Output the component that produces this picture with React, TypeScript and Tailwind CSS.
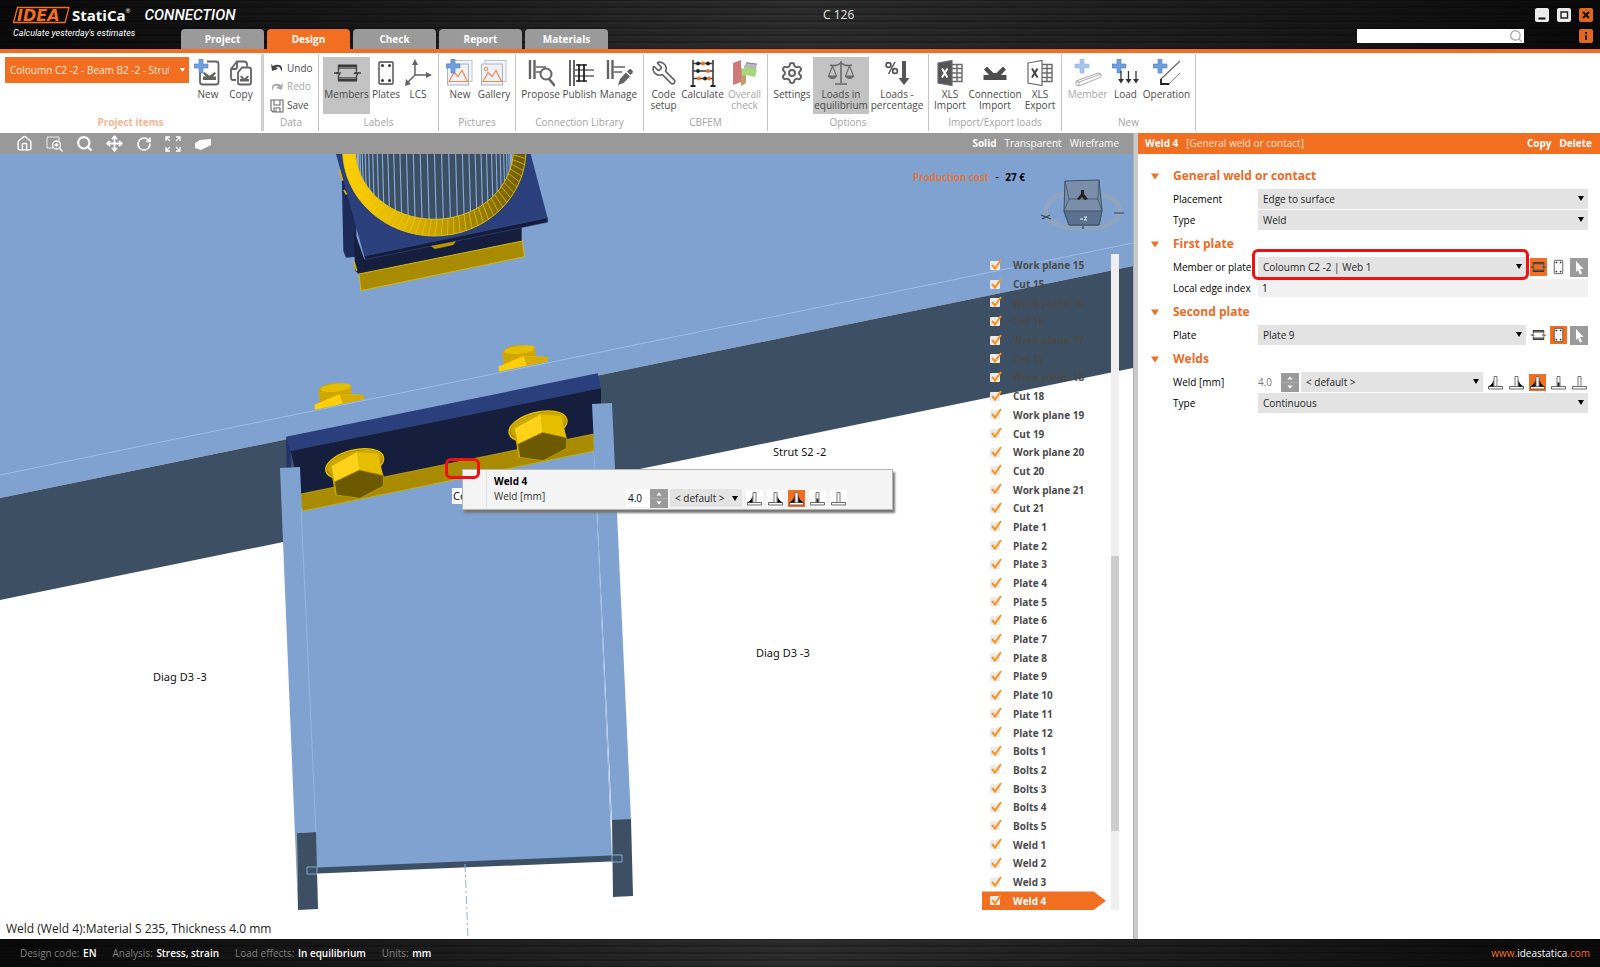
import React, { useState } from "react";
import { House, Move, RotateCw, Search, Settings, Wrench } from "lucide-react";

/* ---------- ribbon icons ---------- */

const Plus = ({ x = 0, y = 0 }: { x?: number; y?: number }) => (
  <path transform={`translate(${x} ${y})`} d="M5 0h4v5h5v4H9v5H5V9H0V5h5z" fill="#6f9fdc" stroke="#4f82c4" strokeWidth=".6" />
);

const Svg = ({ children, w = 28, h = 28 }: { children: React.ReactNode; w?: number; h?: number }) => (
  <svg width={w} height={h} viewBox={`0 0 ${w} ${h}`} fill="none" aria-hidden="true">
    {children}
  </svg>
);

const NewItemIcon = () => (
  <Svg>
    <path d="M13 2.500h9q2.500 0 2.500 2.500v18q0 2.500-2.500 2.500H8.500Q6 25.500 6 23V14" stroke="#636363" strokeWidth="1.800" />
    <path d="M9 21h13v-3.500h-3l3-3-1.500-1.500-4.500 3.500h-1L10.500 13 9 14.500l3 3H9z" fill="#636363" />
    <Plus x={0} y={0} />
  </Svg>
);
const CopyItemIcon = () => (
  <Svg>
    <path d="M9 21H6q-2 0-2-2V10l6-7.500h7q3 0 3 3v2M10 3v5q0 2-2 2H4" stroke="#636363" strokeWidth="1.800" />
    <path d="M15 8.500h7q2 0 2 2v13q0 2-2 2h-9q-2 0-2-2v-10z" fill="#fff" stroke="#636363" strokeWidth="1.800" />
    <path d="M13 22.500h9v-2.500h-2l2-2.500-1.500-1-3 3-3-3-1.500 1 2 2.500h-2z" fill="#636363" />
  </Svg>
);
const MemberGlyph = () => (
  <>
    <path d="M5 7h19M5 21h19" stroke="#3a3a3a" strokeWidth="3" />
    <path d="M5 9.500h19M5 18.500h19" stroke="#6a6a6a" strokeWidth="1.200" />
    <path d="M5.500 6v6M6 12.500l-3 2 4-.5-1.500 3v5M23.500 6v6M24 12.500l-3 2 4-.5-1.500 3v5" stroke="#444" strokeWidth="1.400" />
    <path d="M1 14h3M25 14h3" stroke="#444" strokeWidth="1.300" />
  </>
);
const PlateGlyph = () => (
  <>
    <rect x="7" y="3" width="14" height="22" rx="1" fill="#fff" stroke="#4a4a4a" strokeWidth="1.400" />
    {[[10.5, 6.5], [17.5, 6.5], [10.5, 21.5], [17.5, 21.5]].map(([x, y]) => (
      <circle key={`${x}-${y}`} cx={x} cy={y} r="1.500" fill="#333" />
    ))}
  </>
);
const MembersIcon = () => <Svg><MemberGlyph /></Svg>;
const PlatesIcon = () => <Svg><PlateGlyph /></Svg>;
const LcsIcon = () => (
  <Svg>
    <path d="M11 16V4M11 16h12M11 16l-7 7" stroke="#636363" strokeWidth="1.500" />
    <path d="M11 0l3 6H8zM28 16l-6 3v-6zM1 27l1-7 5 5z" fill="#636363" />
  </Svg>
);
const Picture = () => (
  <>
    <rect x="5" y="1.500" width="21" height="21" fill="#f4f6f9" stroke="#bcc3cc" />
    <rect x="1.500" y="5" width="21" height="21" fill="#eef1f5" stroke="#aab3bf" />
    <path d="M3 22.500l5-9 4 4 4-6 5.500 11z" stroke="#f0894f" strokeWidth="1.200" />
  </>
);
const NewPictureIcon = () => <Svg><Picture /><Plus x={0} y={0} /></Svg>;
const GalleryIcon = () => <Svg><Picture /><circle cx="6" cy="10" r="1.800" stroke="#f0894f" /></Svg>;
const Rails = () => <path d="M3 1v19M7.500 1v19" stroke="#636363" strokeWidth="2.400" />;
const ProposeIcon = () => (
  <Svg>
    <Rails />
    <path d="M9 8h10M9 13h5" stroke="#636363" strokeWidth="1.400" />
    <circle cx="19" cy="15" r="5.500" stroke="#636363" strokeWidth="2" />
    <path d="M22 20l6 7" stroke="#636363" strokeWidth="2.500" />
  </Svg>
);
const PublishIcon = () => (
  <Svg>
    <path d="M4 1v26M8 1v26" stroke="#636363" strokeWidth="2" />
    <path d="M9 11h19M9 17h19" stroke="#636363" strokeWidth="1.400" />
    <path d="M13 5v18M18 5v18" stroke="#222" strokeWidth="1.800" />
    <path d="M10 6h11M10 22h11" stroke="#222" strokeWidth="1.600" />
  </Svg>
);
const ManageIcon = () => (
  <Svg>
    <Rails />
    <path d="M9 8h11M9 13h8" stroke="#636363" strokeWidth="1.400" />
    <path d="M13 26l2-6 6-6.500 4 4-6.500 6.500zM22 12.500l2-2q1.500-1 3 .5t.5 3l-2 2z" fill="#636363" />
  </Svg>
);
const CalculateIcon = () => (
  <Svg>
    <path d="M4 1v26M24 1v26M4 4.500h20M4 12h20M4 19.500h20" stroke="#3a3a3a" strokeWidth="1.600" />
    <path d="M1.500 27h5M21.500 27h5" stroke="#222" strokeWidth="2" />
    <g fill="#222"><circle cx="9" cy="4.500" r="1.900" /><circle cx="19" cy="4.500" r="1.900" /><circle cx="9" cy="12" r="1.900" /><circle cx="16" cy="19.500" r="1.900" /></g>
    <g fill="#f26f21"><circle cx="14" cy="4.500" r="1.900" /><circle cx="19" cy="12" r="1.900" /><circle cx="10" cy="19.500" r="1.900" /><circle cx="20" cy="19.500" r="1.900" /></g>
  </Svg>
);
const OverallIcon = () => (
  <Svg>
    <path d="M2 4l8-3v22l-8 3z" fill="#cf7a7a" />
    <path d="M10 9l5 3v12l-5 3z" fill="#c09a6c" />
    <path d="M13 7l3-4 10 2-1 6-12 1z" fill="#b9b9b9" />
    <path d="M11 11l4-3 11 3-2 7-9-2-4 1z" fill="#a5d77c" />
    <path d="M15 4l11 1" stroke="#888" />
  </Svg>
);
const ScaleIcon = () => (
  <Svg>
    <path d="M14 2v22M3 6q6 2 11-2 5 4 11 2M8 25h12" stroke="#6a6a6a" strokeWidth="1.600" />
    <path d="M5.500 7L1.500 17h8zM22.500 7l-4 10h8z" stroke="#6a6a6a" strokeWidth="1.100" />
    <path d="M1 17h9q-1 3-4.500 3T1 17zM18 17h9q-1 3-4.500 3T18 17z" fill="#6a6a6a" />
  </Svg>
);
const PercentIcon = () => (
  <Svg>
    <circle cx="5.500" cy="6" r="2.400" stroke="#555" strokeWidth="1.700" />
    <circle cx="12" cy="12" r="2.400" stroke="#555" strokeWidth="1.700" />
    <path d="M12 3L5.500 15" stroke="#555" strokeWidth="1.500" />
    <path d="M19 2h4v17h3.500L21 26l-5.500-7H19z" fill="#555" />
  </Svg>
);
const XlsIcon = ({ solid }: { solid?: boolean }) => (
  <Svg>
    <path d="M15 5.500h11v17H15M15 9.500h11M15 14h11M15 18.500h11M21 5.500v17" stroke="#6a6a6a" strokeWidth="1.400" />
    <path d="M2 4l14-2.500v25L2 24z" fill={solid ? "#555" : "#fff"} stroke="#6a6a6a" strokeWidth="1.200" />
    <path d="M6 9.500l5.500 9M11.500 9.500l-5.500 9" stroke={solid ? "#fff" : "#444"} strokeWidth="2" />
  </Svg>
);
const ConnectionIcon = () => (
  <Svg>
    <path d="M2.500 21h23v-5h-5.500l5-5.500-3-3-6.500 6.500h-3L6 7.500l-3 3 5 5.500H2.500z" fill="#4d4d4d" />
  </Svg>
);
const NewMemberIcon = () => (
  <Svg>
    <g opacity=".6"><Plus x={1} y={0} /></g>
    <path d="M2 22l22-8 3 1v3L5 27l-3-1zM2 22l3 1v4M5 23l22-8" stroke="#aaa" />
  </Svg>
);
const LoadIcon = () => (
  <Svg>
    <Plus x={0} y={0} />
    <path d="M9 12v11M16.500 12v11M24 12v11" stroke="#333" strokeWidth="1.300" />
    <path d="M6 20h6l-3 4.500zM13.500 20h6l-3 4.500zM21 20h6l-3 4.500z" fill="#333" />
  </Svg>
);
const OperationIcon = () => (
  <Svg>
    <Plus x={0} y={0} />
    <path d="M27 2L8 20v5h9" stroke="#666" strokeWidth="1.200" />
    <path d="M8 20v5h8" stroke="#222" strokeWidth="1.800" />
    <path d="M27 14L16 25" stroke="#888" />
  </Svg>
);
const LucideTool = ({ children }: { children: React.ReactNode }) => (
  <span className="flex h-7 w-7 items-center justify-center text-[#636363]">{children}</span>
);

/* ---------- ribbon ---------- */

type Tool = { label: string[]; icon: React.ReactNode; width: string; active?: boolean; disabled?: boolean };
type Group = { name: string; width: string; tools: Tool[] };

const groups: Group[] = [
  {
    name: "Labels",
    width: "w-[120px]",
    tools: [
      { label: ["Members"], icon: <MembersIcon />, width: "w-[47px]", active: true },
      { label: ["Plates"], icon: <PlatesIcon />, width: "w-8" },
      { label: ["LCS"], icon: <LcsIcon />, width: "w-8" },
    ],
  },
  {
    name: "Pictures",
    width: "w-[77px]",
    tools: [
      { label: ["New"], icon: <NewPictureIcon />, width: "w-[34px]" },
      { label: ["Gallery"], icon: <GalleryIcon />, width: "w-[34px]" },
    ],
  },
  {
    name: "Connection Library",
    width: "w-[128px]",
    tools: [
      { label: ["Propose"], icon: <ProposeIcon />, width: "w-10" },
      { label: ["Publish"], icon: <PublishIcon />, width: "w-[38px]" },
      { label: ["Manage"], icon: <ManageIcon />, width: "w-10" },
    ],
  },
  {
    name: "CBFEM",
    width: "w-[124px]",
    tools: [
      { label: ["Code", "setup"], icon: <LucideTool><Wrench size={26} strokeWidth={1.5} className="-scale-x-100" /></LucideTool>, width: "w-[34px]" },
      { label: ["Calculate"], icon: <CalculateIcon />, width: "w-11" },
      { label: ["Overall", "check"], icon: <OverallIcon />, width: "w-10", disabled: true },
    ],
  },
  {
    name: "Options",
    width: "w-[161px]",
    tools: [
      { label: ["Settings"], icon: <LucideTool><Settings size={24} strokeWidth={2} /></LucideTool>, width: "w-[42px]" },
      { label: ["Loads in", "equilibrium"], icon: <ScaleIcon />, width: "w-14", active: true },
      { label: ["Loads -", "percentage"], icon: <PercentIcon />, width: "w-14" },
    ],
  },
  {
    name: "Import/Export loads",
    width: "w-[133px]",
    tools: [
      { label: ["XLS", "Import"], icon: <XlsIcon solid />, width: "w-[38px]" },
      { label: ["Connection", "Import"], icon: <ConnectionIcon />, width: "w-[52px]" },
      { label: ["XLS", "Export"], icon: <XlsIcon />, width: "w-[38px]" },
    ],
  },
  {
    name: "New",
    width: "w-[134px]",
    tools: [
      { label: ["Member"], icon: <NewMemberIcon />, width: "w-11", disabled: true },
      { label: ["Load"], icon: <LoadIcon />, width: "w-8" },
      { label: ["Operation"], icon: <OperationIcon />, width: "w-[50px]" },
    ],
  },
];

function RibbonButton({ label, icon, width, active, disabled }: Tool) {
  return (
    <button
      type="button"
      disabled={disabled}
      className={`flex h-[57px] shrink-0 flex-col items-center pt-[2px] text-[10px] leading-[11px] whitespace-nowrap ${width} ${
        active ? "bg-[#c3c3c3]" : ""
      } ${disabled ? "text-[#a6a6a6]" : "text-[#4b4b4b]"}`}
    >
      {icon}
      <span className="mt-[2px] flex flex-col items-center">
        {label.map((line) => (
          <span key={line}>{line}</span>
        ))}
      </span>
    </button>
  );
}

function RibbonGroup({ name, width, tools }: Group) {
  return (
    <section className={`flex shrink-0 flex-col items-center border-r border-[#c4c4c4] ${width}`}>
      <div className="flex h-[61px] items-start justify-center pt-[3px]">
        {tools.map((tool) => (
          <RibbonButton key={tool.label.join(" ")} {...tool} />
        ))}
      </div>
      <span className="text-[10px] leading-[14px] whitespace-nowrap text-[#a3a3a3]">{name}</span>
    </section>
  );
}

function Ribbon() {
  return (
    <div className="flex h-20 bg-white pt-px pb-[2px]">
      <section className="flex w-[264px] shrink-0 flex-col border-r-[3px] border-[#cfcfcf]">
        <div className="flex h-[61px] items-start pt-[3px] pl-[5px]">
          <div className="relative w-[184px]">
            <select aria-label="Project item" className="block h-[26px] w-full appearance-none bg-[#f26f21] pr-5 pl-[5px] text-[10px] text-[#ffe6d8]">
              <option>Coloumn C2 -2 - Beam B2 -2 - Strut S2 -2</option>
            </select>
            <svg className="pointer-events-none absolute top-[11px] right-1 h-1 w-[5px]" viewBox="0 0 5 4" fill="#fff"><path d="M0 0h5L2.500 4z" /></svg>
          </div>
          <RibbonButton label={["New"]} icon={<NewItemIcon />} width="w-[38px]" />
          <RibbonButton label={["Copy"]} icon={<CopyItemIcon />} width="w-7" />
        </div>
        <span className="text-center text-[10px] leading-[14px] font-bold text-[#f8b491]">Project items</span>
      </section>
      <section className="flex w-[55px] shrink-0 flex-col border-r border-[#c4c4c4]">
        <div className="flex h-[61px] flex-col justify-around pt-[5px] pl-[6px] text-[10px] text-[#4b4b4b]">
          <button type="button" className="flex h-[18px] items-center gap-[3px]">
            <Svg w={14} h={14}><path d="M1 3l1 7 6-2-2-1.500q4-2.500 5.500 4.500Q14 2 5 4L3 5z" fill="#444" /></Svg>Undo
          </button>
          <button type="button" disabled className="flex h-[18px] items-center gap-[3px] text-[#a8a8a8]">
            <Svg w={14} h={14}><path d="M13 3l-1 7-6-2 2-1.500q-4-2.500-5.500 4.500Q0 2 9 4l2 1z" fill="#aaa" /></Svg>Redo
          </button>
          <button type="button" className="flex h-[18px] items-center gap-[3px]">
            <Svg w={14} h={14}><path d="M1 1h12v12H3l-2-2zM4 1v5h6V1M4 13V9h6v4M6 10.500v2" stroke="#666" strokeWidth="1.100" /></Svg>Save
          </button>
        </div>
        <span className="text-center text-[10px] leading-[14px] text-[#a3a3a3]">Data</span>
      </section>
      {groups.map((g) => (
        <RibbonGroup key={g.name} {...g} />
      ))}
    </div>
  );
}

/* ---------- title bar ---------- */

const brushed =
  "bg-[linear-gradient(90deg,#000000cc_0%,#00000055_30%,#00000000_50%,#00000055_72%,#000000cc_100%),repeating-linear-gradient(180deg,#1c1c1c_0px,#343434_2px,#262626_4px,#303030_5px,#1e1e1e_7px)]";

function TitleBar() {
  const tabs = ["Project", "Design", "Check", "Report", "Materials"];
  return (
    <header className={`flex h-[53px] border-b-4 border-[#f26f21] ${brushed}`}>
      <div className="w-[181px] shrink-0 pt-[6px] pl-[13px] whitespace-nowrap text-white">
        <div className="flex h-[18px] items-center">
          <svg className="shrink-0" width="57" height="18" viewBox="0 0 57 18" aria-label="IDEA">
            <path d="M4.500 1.500H56L52 16.500H.5z" fill="none" stroke="#f26f21" strokeWidth="1.300" />
            <text x="4" y="14.500" fontFamily="DejaVu Sans" fontSize="16" fontWeight="bold" fontStyle="italic" fill="#f26f21">IDEA</text>
          </svg>
          <span className="ml-[2px] font-['Open_Sans'] text-[15px] leading-[18px] font-bold">StatiCa</span>
          <sup className="-top-1 text-[6px]">®</sup>
          <span className="ml-[14px] font-['Roboto'] text-[15px] leading-[18px] font-medium italic">CONNECTION</span>
        </div>
        <div className="mt-[3px] font-['Roboto'] text-[9px] leading-3 italic">Calculate yesterday's estimates</div>
      </div>
      <nav className="flex items-end gap-[3px]">
        {tabs.map((t) => (
          <button key={t} type="button" className={`h-5 w-[83px] rounded-t-[4px] text-[10px] leading-5 font-bold text-white ${t === "Design" ? "bg-[#f26f21]" : "bg-[#9a9a9a]"}`}>
            {t}
          </button>
        ))}
      </nav>
      <h1 className="flex-1 pt-[6px] pl-[215px] text-[12px] leading-[18px] text-[#e6e6e6]">C 126</h1>
      <div className="flex w-[243px] shrink-0 flex-col gap-[7px] pt-2 pr-[7px]">
        <div className="flex justify-end gap-2">
          <button type="button" aria-label="Minimize" className="h-[14px] w-[14px] rounded-[2px] bg-[#ececec]"><Svg w={14} h={14}><path d="M3.500 10.500h7" stroke="#111" strokeWidth="2" /></Svg></button>
          <button type="button" aria-label="Maximize" className="h-[14px] w-[14px] rounded-[2px] bg-[#ececec]"><Svg w={14} h={14}><path d="M4 4h6.500v6H4z" stroke="#222" strokeWidth="1.400" /></Svg></button>
          <button type="button" aria-label="Close" className="h-[14px] w-[14px] rounded-[2px] bg-[#e2671f]"><Svg w={14} h={14}><path d="M4 4l6 6M10 4l-6 6" stroke="#111" strokeWidth="2" /></Svg></button>
        </div>
        <div className="flex justify-between">
          <div className="flex h-[14px] w-[167px] items-center bg-white">
            <input type="search" aria-label="Search" className="h-full w-full min-w-0 flex-1 px-1 text-[10px] outline-none" />
            <Search size={14} className="mr-px shrink-0 text-[#b0b0b0]" strokeWidth={2.5} />
          </div>
          <button type="button" aria-label="Info" className="h-[14px] w-[14px] rounded-[2px] bg-[#e2671f]"><Svg w={14} h={14}><path d="M7 3v2M7 6v5" stroke="#222" strokeWidth="2" /></Svg></button>
        </div>
      </div>
    </header>
  );
}

/* ---------- 3D scene ---------- */

const ringAngles = Array.from({ length: 45 }, (_, i) => (i * 4 * Math.PI) / 180);

function Bolt({ dx = 0, dy = 0 }) {
  return (
    <g transform={`translate(${dx} ${dy})`} strokeLinejoin="round">
      <ellipse cx="284" cy="1002" rx="89" ry="42" transform="rotate(-14 284 1002)" fill="#a88700" stroke="#e8c400" strokeWidth="4" />
      <ellipse cx="284" cy="998" rx="84" ry="34" transform="rotate(-14 284 998)" fill="#cda800" />
      <path d="M212 1010L292 966l6 54-76 38z" fill="#ffd21a" />
      <path d="M292 966l62 6 16 66-72-18z" fill="#e6be00" />
      <path d="M222 1056l76-36 72 16v32l-70 37-72-10z" fill="#6c5900" stroke="#c9a600" strokeWidth="2" />
      <path d="M212 1010l10 48 6 37" fill="none" stroke="#c9a600" strokeWidth="5" />
    </g>
  );
}

function Nut({ dx = 0, dy = 0 }) {
  return (
    <g transform={`translate(${dx} ${dy})`}>
      <path d="M175 788q2-27 52-29 48 2 48 22l-4 30-90 10z" fill="#cda600" />
      <ellipse cx="227" cy="773" rx="46" ry="12" transform="rotate(-7 227 773)" fill="#e6be00" />
      <path d="M163 824l76-32 73 3v13l-64 13-83 18z" fill="#ffcf0a" />
      <path d="M239 792l73 3v13l-64 13z" fill="#d6ad00" />
    </g>
  );
}

function Scene() {
  return (
    <svg className="absolute inset-0 h-full w-full" viewBox="0 154 1133 785" preserveAspectRatio="xMinYMin slice" aria-label="3D model of the connection">
      <path d="M0 154h1133v112L0 498z" fill="#80a2d0" />
      <path d="M0 498L1133 266v102L0 600z" fill="#3d4f63" />
      <path d="M0 475L1133 243" stroke="#a0bde6" strokeWidth="1" />

      {/* column web and flanges */}
      <path d="M301 508L594 449l18 408-296 13z" fill="#80a2d0" />
      <path d="M306 868l316-13v6l-316 13z" fill="#3d4f63" />

      <g transform="translate(260 130) scale(.33333)">
        {/* tube stub with its end plate */}
        <path d="M245 120l45 160-2 100-30 3-8-20z" fill="#1d2b5a" />
        <path d="M282 300l31 88L785 290v43L297 432l-12-10z" fill="#151e3c" />
        <path d="M228 72h584l51 193-550 115z" fill="#2a3f7c" />
        <path d="M313 378L863 263v14L315 389z" fill="#141c3a" stroke="#3c5496" strokeWidth="1.500" />
        <path d="M512 348l76-14-8 11-55 12z" fill="#b89800" />
        <path d="M297 432L787 333l6 47-490 102z" fill="#a88b00" stroke="#e0bd00" strokeWidth="2.500" />
        <path d="M238 120l10 32M252 180l8 14M282 395l8 28" stroke="#d9b600" strokeWidth="5" />
        <ellipse cx="523" cy="60" rx="237" ry="208" fill="#3d4f63" />
        <clipPath id="tube"><ellipse cx="523" cy="60" rx="237" ry="208" /></clipPath>
        <g clipPath="url(#tube)" stroke="#86a9d8" strokeWidth="3.500">
          {Array.from({ length: 35 }, (_, i) => {
            const x = 523 - 232 * Math.cos((i * Math.PI) / 34);
            return <path key={i} d={`M${x} 60L${x + 6} 280`} />;
          })}
        </g>
        <linearGradient id="ring" x1="0" x2="1">
          <stop offset="0" stopColor="#ffd000" />
          <stop offset=".4" stopColor="#d8b000" />
          <stop offset="1" stopColor="#6b5800" />
        </linearGradient>
        <path d="M248 60a275 258 0 0 0 550 0h-38a237 208 0 0 1-474 0z" fill="url(#ring)" />
        <g stroke="#f0cc10" strokeWidth="2">
          {ringAngles.map((a) => (
            <path key={a} d={`M${523 + 237 * Math.cos(a)} ${60 + 208 * Math.sin(a)}L${523 + 275 * Math.cos(a + 0.03)} ${60 + 258 * Math.sin(a + 0.03)}`} />
          ))}
        </g>
        <path d="M248 60a275 258 0 0 0 550 0M286 60a237 208 0 0 0 474 0" fill="none" stroke="#f0cc10" strokeWidth="2.500" />

        <Nut />
        <Nut dx={552} dy={-114} />

        {/* bolted plate */}
        <path d="M78 920L1013 730l10 45L92 963z" fill="#2a3f7c" />
        <path d="M78 920l14 43v60H80z" fill="#22336a" />
        <path d="M92 963L1023 775v60l-22 80L123 1092z" fill="#151e3c" />
        <path d="M123 1092L1001 912v51L127 1143z" fill="#a88b00" stroke="#d8b600" strokeWidth="2" />
        <Bolt />
        <Bolt dx={550} dy={-113} />
      </g>

      <path d="M280 468l20-1 16 365-19 1 1 76z" fill="#80a2d0" />
      <path d="M592 404l20-1 19 417-19 1z" fill="#80a2d0" />
      <path d="M297 833l19-1 2 77-20 1z" fill="#3d4f63" />
      <path d="M612 820l19-1 2 77-20 1z" fill="#3d4f63" />
      <path d="M301 508l15 324M594 451l17 369" stroke="#97b6e0" fill="none" />
      <path d="M307 867h10v7h-10zM612 855h10v7h-10z" stroke="#86a9d8" fill="none" />
      <path d="M465 864l3 75" stroke="#8fb0dc" strokeDasharray="8 3 2 3" />
      <path d="M452 488h14v16h-14z" fill="#fff" />
      <g fontFamily="'Noto Sans', sans-serif" fontSize="11" fill="#111">
        <text x="453" y="500">Co</text>
        <text x="773" y="456">Strut S2 -2</text>
        <text x="756" y="657">Diag D3 -3</text>
        <text x="153" y="681">Diag D3 -3</text>
      </g>

      {/* orientation cube */}
      <path d="M1046 208q-2 20 37 20t37-20q-6-12-18-13M1046 208q4-12 18-14" fill="none" stroke="#98a5b8" strokeOpacity=".7" strokeWidth="5" />
      <path d="M1065 181l34-1 3 30-3 15h-30l-5-14z" fill="#7a8ea9" stroke="#3f5066" />
      <path d="M1064 211h38l-3 14h-30z" fill="#5b7190" stroke="#3f5066" />
      <path d="M1065 181l4 18h29l1-19M1069 199l-5 12M1098 199l4 12" stroke="#44566e" fill="none" strokeWidth=".8" />
      <path d="M1077 199l4-5v-4h3v4l4 5-3 1-3-3-3 3z" fill="#222" />
      <path d="M1080 219h3M1084 217h3l-3 3h3" stroke="#e8eef7" fill="none" />
      <path d="M1041 215l10 4M1042 219l8-4M1083 226v3" stroke="#33455c" strokeWidth="1.300" />
      <path d="M1114 213h10" stroke="#33455c" />
    </svg>
  );
}

/* ---------- weld glyphs and small controls ---------- */

function WeldGlyph({ kind }: { kind: number }) {
  return (
    <svg width="17" height="17" viewBox="0 0 17 17" aria-hidden="true">
      <path d="M1.500 12.500h14v2.500h-14z" fill="#fff" stroke="#555" strokeWidth=".9" />
      <path d="M7 2.500h3v10H7z" fill="#fff" stroke="#666" strokeWidth=".9" />
      {(kind === 0 || kind === 2) && <path d="M6.500 5.500v7H1q4.500-1.500 5.500-7z" fill="#000" />}
      {(kind === 1 || kind === 2) && <path d="M10.500 5.500v7H16q-4.500-1.500-5.500-7z" fill="#000" />}
      {kind === 3 && <path d="M7.500 8.500h2v4h-2z" fill="#222" />}
    </svg>
  );
}

const weldNames = ["Left fillet", "Right fillet", "Double fillet", "Butt", "No weld"];

function WeldButtons() {
  const [kind, setKind] = useState(2);
  return (
    <div className="flex shrink-0 gap-1">
      {weldNames.map((n, i) => (
        <button key={n} type="button" aria-label={n} aria-pressed={kind === i} onClick={() => setKind(i)} className={`h-[17px] w-[17px] ${kind === i ? "bg-[#f26f21]" : "bg-white"}`}>
          <WeldGlyph kind={i} />
        </button>
      ))}
    </div>
  );
}

const Spinner = () => (
  <button type="button" aria-label="Change weld size" className="h-[19px] w-[18px] shrink-0 bg-[#9b9b9b]">
    <Svg w={18} h={19}><path d="M9 3.500l2.500 3h-5zM9 15.500l2.500-3h-5z" fill="#fff" /><path d="M0 9.500h18" stroke="#aaa" /></Svg>
  </button>
);

function Drop({ id, options, label }: { id?: string; options: string[]; label?: string }) {
  return (
    <div className="relative h-full min-w-0 flex-1">
      <select id={id} aria-label={label} className="block h-full w-full appearance-none bg-[#e3e3e3] pr-4 pl-[5px] text-[10px] text-[#262626]">
        {options.map((o) => (
          <option key={o}>{o}</option>
        ))}
      </select>
      <svg className="pointer-events-none absolute top-[7px] right-1 h-[5px] w-[6px]" viewBox="0 0 6 5"><path d="M0 0h6L3 5z" /></svg>
    </div>
  );
}

/* ---------- viewport ---------- */

const range = (name: string, n: number) => Array.from({ length: n }, (_, i) => `${name} ${i + 1}`);
const entities = [
  ...[15, 16, 17, 18, 19, 20, 21].flatMap((n) => [`Work plane ${n}`, `Cut ${n}`]),
  ...range("Plate", 12),
  ...range("Bolts", 5),
  ...range("Weld", 4),
];

function EntityList() {
  return (
    <div className="absolute top-[102px] right-[14px] bottom-[29px] flex w-[137px]">
      <ul className="flex flex-1 flex-col">
        {entities.map((name) => {
          const selected = name === "Weld 4";
          return (
            <li
              key={name}
              className={`mr-[5px] flex min-h-0 flex-1 items-center pl-2 ${
                selected ? "bg-[#f26f21] text-white [clip-path:polygon(0_0,90%_0,100%_50%,90%_100%,0_100%)]" : "text-[#4a4a4a]"
              }`}
            >
              <label className="flex items-center gap-[13px] text-[10px] leading-[18px] font-bold">
                <span className="relative h-[9px] w-[10px]">
                  <input type="checkbox" defaultChecked className="peer absolute inset-0 h-full w-full appearance-none rounded-[1px] bg-[#eeeae8]" />
                  <svg className="pointer-events-none absolute -top-[2px] left-0 hidden h-3 w-3 peer-checked:block" viewBox="0 0 12 12" fill="none"><path d="M2 6l3 3.500L11 1" stroke="#f7931e" strokeWidth="2" /></svg>
                </span>
                {name}
              </label>
            </li>
          );
        })}
      </ul>
      <div className="-mt-[2px] flex w-2 flex-col bg-[#efefef]">
        <div className="basis-[46%]" />
        <div className="basis-[42%] bg-[#cdcdcd]" />
      </div>
    </div>
  );
}

function WeldPopup() {
  return (
    <form className="absolute top-[315px] left-[462px] flex h-[41px] w-[431px] border border-[#b5b5b5] bg-[#f4f4f4] text-[10px] shadow-[2px_3px_2px_#777]">
      <div className="w-6 border-r border-[#e2e2e2]" />
      <div className="flex flex-1 flex-col pl-[7px]">
        <strong className="mt-[3px] h-4 leading-4">Weld 4</strong>
        <div className="-mt-px flex h-5 items-center">
          <label htmlFor="popup-weld" className="w-[132px] self-start leading-4 text-[#333]">Weld [mm]</label>
          <input id="popup-weld" defaultValue="4.0" className="h-[18px] w-6 shrink-0 bg-white pl-[2px] text-[10px]" />
          <Spinner />
          <div className="mr-1 ml-[2px] flex h-[18px] w-[72px]">
            <Drop label="Weld material" options={["< default >"]} />
          </div>
          <WeldButtons />
        </div>
      </div>
    </form>
  );
}

function ViewToolbar() {
  return (
    <div className="flex h-[21px] items-center bg-[#999] text-white">
      <div className="flex items-center gap-[13px] pl-4">
        <button type="button" aria-label="Home"><House size={17} strokeWidth={2} /></button>
        <button type="button" aria-label="Zoom window"><Svg w={17} h={17}><path d="M7 13H1V2h12v4" stroke="#eee" /><circle cx="10.500" cy="10" r="4" stroke="#fff" strokeWidth="1.300" /><path d="M13.500 13l3 3.500M10.500 8v4M8.500 10h4" stroke="#fff" strokeWidth="1.300" /></Svg></button>
        <button type="button" aria-label="Zoom"><Search size={17} strokeWidth={3} /></button>
        <button type="button" aria-label="Pan"><Move size={17} strokeWidth={2.5} /></button>
        <button type="button" aria-label="Rotate"><RotateCw size={16} strokeWidth={2.5} /></button>
        <button type="button" aria-label="Zoom to fit"><Svg w={16} h={16}><path d="M1 5V1h4M11 1h4v4M15 11v4h-4M5 15H1v-4M1 1l4 4M15 1l-4 4M15 15l-4-4M1 15l4-4" stroke="#fff" strokeWidth="1.300" /></Svg></button>
        <button type="button" aria-label="Solid view"><Svg w={18} h={14}><path d="M1 6l5-3 11-1v4L6 8zM1 6l6 2v5l-6-2zM7 8l10-3v3L7 13z" fill="#fff" /></Svg></button>
      </div>
      <div className="ml-auto flex pr-[14px] text-[10px]">
        <button type="button" className="mr-2 font-bold">Solid</button>
        <button type="button" className="mr-2">Transparent</button>
        <button type="button">Wireframe</button>
      </div>
    </div>
  );
}

function Viewport() {
  return (
    <main className="flex min-w-0 flex-1 flex-col">
      <ViewToolbar />
      <div className="relative flex-1 overflow-hidden bg-white">
        <Scene />
        <p className="absolute top-[15px] right-[108px] text-[10px] leading-4 font-semibold text-black">
          <span className="mr-1 text-[#f26f21]">Production cost</span> - <span className="ml-1 font-bold">27 €</span>
        </p>
        <EntityList />
        <WeldPopup />
        <div className="absolute top-[304px] left-[445px] h-[21px] w-[35px] rounded-[6px] border-[3px] border-[#f01010]" />
        <p className="absolute bottom-0 left-[6px] text-[12px] leading-5 text-[#222]">Weld (Weld 4):Material S 235, Thickness 4.0 mm</p>
      </div>
    </main>
  );
}

/* ---------- properties panel ---------- */

function Section({ title, children }: { title: string; children: React.ReactNode }) {
  return (
    <section>
      <h2 className="flex h-[26px] items-center text-[12px] font-bold text-[#ec6a26]">
        <svg className="mr-[13px] ml-3 h-[7px] w-[10px]" viewBox="0 0 10 7" fill="#f26f21"><path d="M1 0.500h8L5 6.500z" /></svg>
        {title}
      </h2>
      {children}
    </section>
  );
}

function Row({ label, id, children }: { label: string; id: string; children: React.ReactNode }) {
  return (
    <div className="mb-px flex h-5 items-center pr-3 pl-[35px]">
      <label htmlFor={id} className="w-[85px] shrink-0 text-[10px] font-medium whitespace-nowrap text-black">{label}</label>
      <div className="flex h-full min-w-0 flex-1 items-center">{children}</div>
    </div>
  );
}

function PickButtons({ active }: { active: "member" | "plate" }) {
  return (
    <div className="ml-1 flex shrink-0 items-center gap-[3px]">
      <button type="button" aria-label="Member" className={`h-[18px] w-[17px] ${active === "member" ? "bg-[#f26f21]" : ""}`}><svg width="17" height="18" viewBox="0 0 29 28" fill="none"><MemberGlyph /></svg></button>
      <button type="button" aria-label="Plate" className={`h-[18px] w-[17px] ${active === "plate" ? "bg-[#f26f21]" : ""}`}><svg width="17" height="18" viewBox="0 0 28 28" fill="none"><PlateGlyph /></svg></button>
      <button type="button" aria-label="Pick in scene" className="h-[19px] w-[18px] bg-[#9b9b9b]"><Svg w={18} h={19}><path d="M6 3l7.500 8H10l2 4.500-2 1-2-4.500-2 2z" fill="#fff" /></Svg></button>
    </div>
  );
}

function Properties() {
  return (
    <aside className="w-[462px] shrink-0 bg-white">
      <header className="flex h-[21px] items-center bg-[#f26f21] pr-2 pl-[7px] text-[10px] text-white">
        <strong>Weld 4</strong>
        <span className="ml-2 text-[#ffe3d2]">[General weld or contact]</span>
        <button type="button" className="ml-auto font-bold">Copy</button>
        <button type="button" className="ml-2 font-bold">Delete</button>
      </header>
      <div className="pt-[9px]">
        <Section title="General weld or contact">
          <Row label="Placement" id="placement"><Drop id="placement" options={["Edge to surface"]} /></Row>
          <Row label="Type" id="kind"><Drop id="kind" options={["Weld", "Contact"]} /></Row>
        </Section>
        <Section title="First plate">
          <Row label="Member or plate" id="first">
            <div className="relative h-full min-w-0 flex-1">
              <Drop id="first" options={["Coloumn C2 -2 | Web 1"]} />
              <div className="pointer-events-none absolute -top-2 -right-[3px] -bottom-[3px] -left-[6px] rounded-[6px] border-[3px] border-[#f01010]" />
            </div>
            <PickButtons active="member" />
          </Row>
          <Row label="Local edge index" id="edge"><input id="edge" defaultValue="1" className="h-[18px] w-full bg-[#f1f1f1] pl-1 text-[10px]" /></Row>
        </Section>
        <Section title="Second plate">
          <Row label="Plate" id="second"><Drop id="second" options={["Plate 9"]} /><PickButtons active="plate" /></Row>
        </Section>
        <Section title="Welds">
          <Row label="Weld [mm]" id="size">
            <input id="size" defaultValue="4.0" className="w-[23px] shrink-0 text-[10px] text-[#777]" />
            <Spinner />
            <div className="mr-1 ml-[2px] flex h-full flex-1"><Drop label="Weld material" options={["< default >"]} /></div>
            <WeldButtons />
          </Row>
          <Row label="Type" id="weld-type"><Drop id="weld-type" options={["Continuous", "Partial"]} /></Row>
        </Section>
      </div>
    </aside>
  );
}

function StatusBar() {
  const items = [["Design code:", "EN"], ["Analysis:", "Stress, strain"], ["Load effects:", "In equilibrium"], ["Units:", "mm"]];
  return (
    <footer className={`flex h-7 items-center gap-4 pr-[10px] pl-5 text-[10px] font-medium ${brushed}`}>
      {items.map(([k, v]) => (
        <span key={k} className="text-[#808080]">{k} <b className="ml-px font-semibold text-white">{v}</b></span>
      ))}
      <a href="#site" className="ml-auto font-normal text-[#f26f21]">www.<span className="text-white">ideastatica</span>.com</a>
    </footer>
  );
}

export default function App() {
  return (
    <div className="flex min-h-screen flex-col bg-white font-['Open_Sans','Noto_Sans',sans-serif]">
      <TitleBar />
      <Ribbon />
      <div className="flex flex-1">
        <Viewport />
        <div className="w-[5px] shrink-0 border-l border-[#b0b0b0] bg-[#cacaca]" />
        <Properties />
      </div>
      <StatusBar />
    </div>
  );
}
